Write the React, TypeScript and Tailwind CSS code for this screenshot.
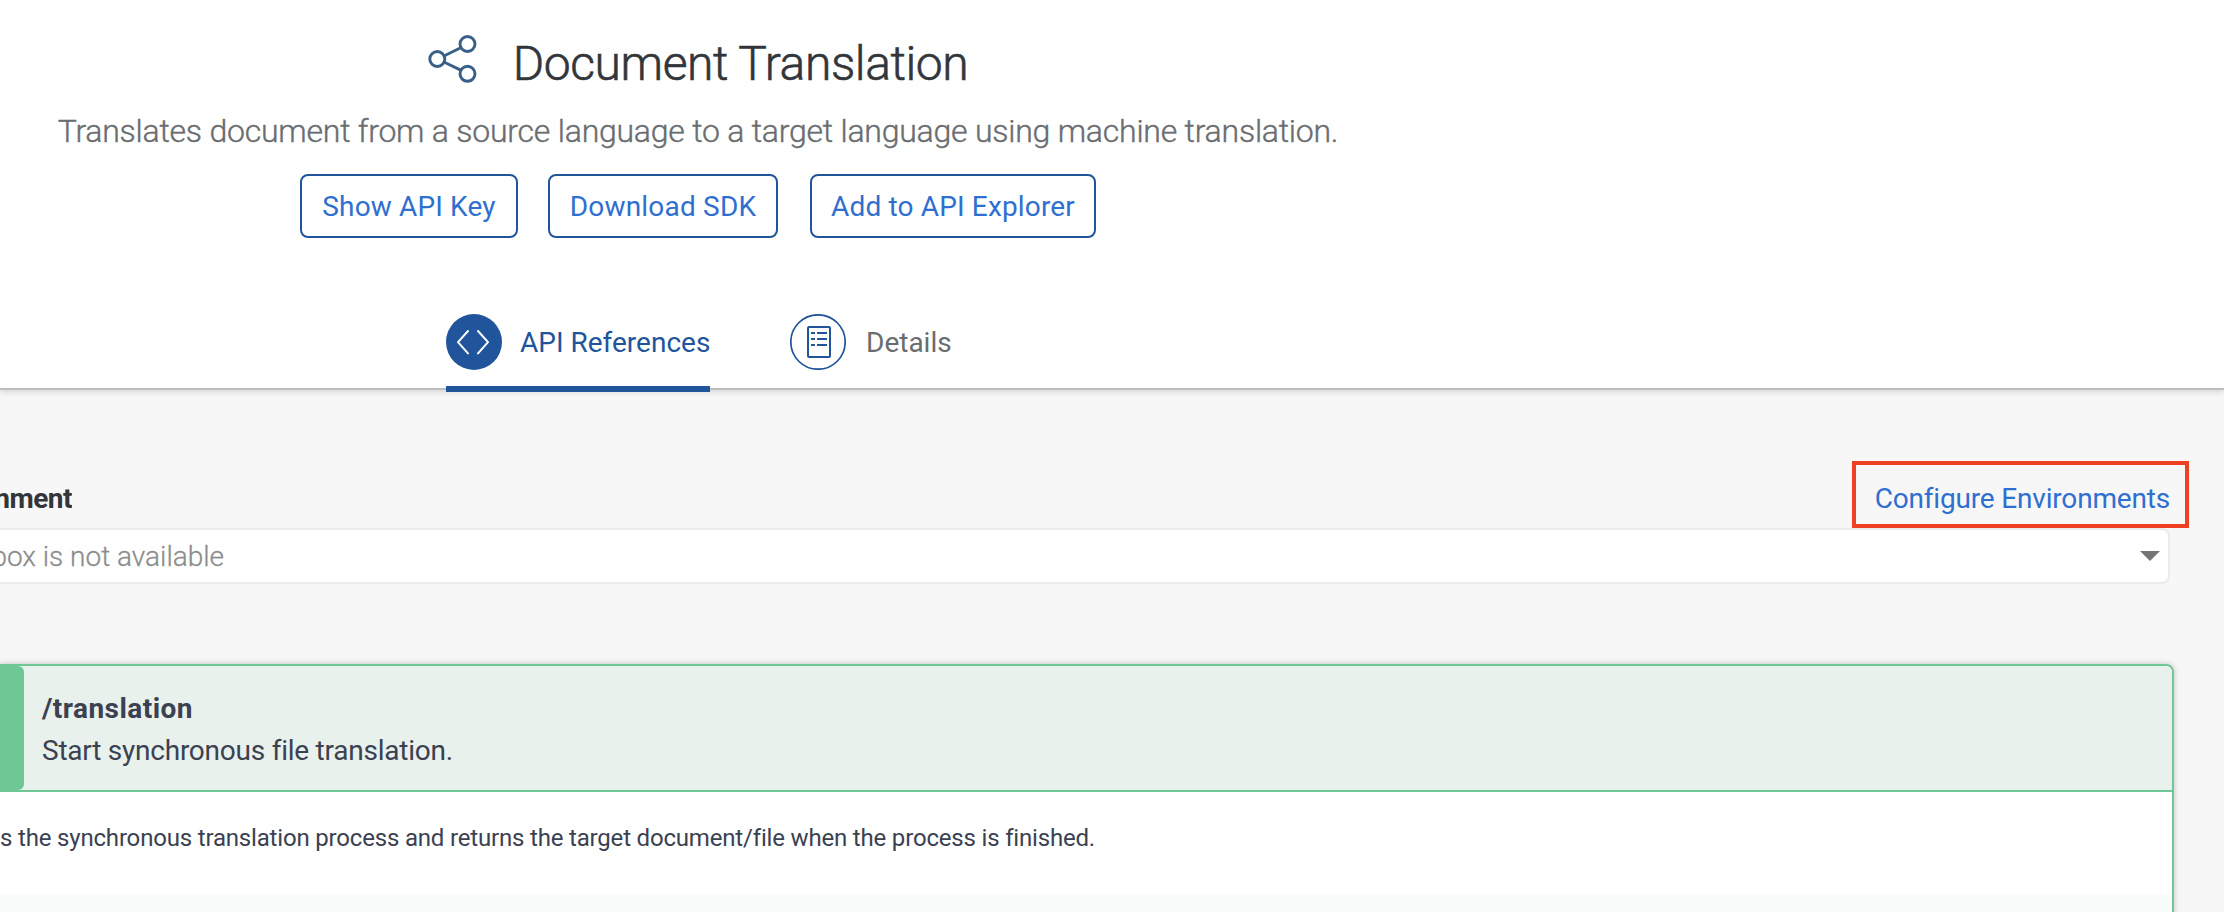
import type { ReactNode } from "react";

function ShareIcon() {
  return (
    <svg width="50" height="50" viewBox="0 0 50 50" fill="none" stroke="#385f88" strokeWidth="2.9">
      <circle cx="9.3" cy="25" r="7.5" />
      <circle cx="39.5" cy="10" r="7.5" />
      <circle cx="39.5" cy="39.8" r="7.5" />
      <path d="M16.4 21.7 32.7 13.7M16.4 28.3 32.7 36.1" />
    </svg>
  );
}

function CodeIcon() {
  return (
    <svg width="56" height="56" viewBox="0 0 56 56" fill="none" stroke="#fff" strokeWidth="2" strokeLinecap="round" strokeLinejoin="round">
      <path d="M22 17 12 28.2 22 39.4M32 17 42 28.2 32 39.4" />
    </svg>
  );
}

function DetailsIcon() {
  return (
    <svg width="56" height="56" viewBox="0 0 56 56" fill="none" stroke="#21559b" strokeWidth="2">
      <circle cx="28" cy="28" r="27.2" strokeWidth="1.7" />
      <rect x="18" y="13" width="22" height="30" rx="1" />
      <path d="M21 19h4M27 19h10M21 25h4M27 25h10M21 31h4M27 31h10" />
    </svg>
  );
}

function OutlineButton({ className, children }: { className: string; children: ReactNode }) {
  return (
    <button className={`h-16 rounded-lg border-2 border-[#21559b] pt-[2px] text-[28px] whitespace-nowrap text-[#2f6fd0] ${className}`}>
      {children}
    </button>
  );
}

export default function App() {
  return (
    <div className="flex h-[912px] w-full flex-col overflow-hidden bg-[#f7f7f7] font-['Roboto',sans-serif] text-[#32363a]">
      <header className="z-10 h-[390px] shrink-0 border-b-2 border-[#bdbdbd] bg-white shadow-[0_2px_6px_rgba(0,0,0,0.14)]">
        <div className="flex h-full w-[1396px] flex-col items-center">
          <div className="mt-8 flex h-16 items-start">
            <div className="mt-[2px] mr-[35px]">
              <ShareIcon />
            </div>
            <h1 className="text-[48px] leading-[64px] font-light tracking-[-0.43px] [-webkit-text-stroke:0.6px_#32363a]">
              Document Translation
            </h1>
          </div>
          <p className="mt-[11px] text-[32px] leading-[48px] font-light tracking-[-0.23px] whitespace-nowrap text-[#6a6d70] [-webkit-text-stroke:0.4px_#6a6d70]">
            Translates document from a source language to a target language using machine translation.
          </p>
          <div className="mt-[19px] flex">
            <OutlineButton className="w-[218px] tracking-[0.15px]">Show API Key</OutlineButton>
            <OutlineButton className="ml-[30px] w-[230px] tracking-[0.2px]">Download SDK</OutlineButton>
            <OutlineButton className="ml-8 w-[286px] tracking-[0.15px]">Add to API Explorer</OutlineButton>
          </div>
          <nav className="mt-[76px] flex w-[504px] text-[28px] leading-[58px]">
            <a className="flex h-[78px] w-[264px] border-b-[6px] border-[#21559b] text-[#21559b]">
              <span className="mr-[18px] size-14 rounded-full bg-[#21559b]">
                <CodeIcon />
              </span>
              <span className="whitespace-nowrap">API References</span>
            </a>
            <a className="ml-20 flex text-[#6a6d70]">
              <span className="mr-5 size-14">
                <DetailsIcon />
              </span>
              <span>Details</span>
            </a>
          </nav>
        </div>
      </header>

      <main className="flex flex-col pr-[50px]">
        <div className="mt-[71px] mr-[-15px] flex h-[67px] items-start justify-between">
          <div className="mt-[21px] flex w-[72px] justify-end overflow-hidden text-[28px] leading-[34px] font-bold tracking-[-0.5px]">
            nment
          </div>
          <div className="flex h-[67px] w-[337px] items-center justify-end border-4 border-[#ee4023] pr-[15px]">
            <a className="mt-[8px] text-[28px] leading-[34px] tracking-[-0.18px] whitespace-nowrap text-[#2f6fd0]">
              Configure Environments
            </a>
          </div>
        </div>

        <div className="mr-1 flex h-14 items-center justify-between rounded-r-lg border-2 border-l-0 border-[#ebebeb] bg-white pr-2">
          <div className="mt-[2px] flex w-56 justify-end overflow-hidden text-[28px] leading-[34px] font-light whitespace-nowrap text-[#8c8c8c] [-webkit-text-stroke:0.3px_#8c8c8c]">
            box is not available
          </div>
          <svg width="20" height="10" viewBox="0 0 20 10" fill="#757575">
            <path d="M0 0h20L10 10z" />
          </svg>
        </div>

        <section className="mt-20 h-[300px] rounded-tr-lg border-2 border-l-0 border-[#6fc795] bg-white text-[#3b4151] shadow-[0_0_6px_rgba(0,0,0,0.22)]">
          <div className="flex h-[126px] overflow-hidden rounded-tr-md border-b-2 border-[#6fc795] bg-[#e8f1ec]">
            <div className="w-6 rounded-r-md bg-[#6fc795]" />
            <div className="pt-[25px] pl-[18px] text-[28px]">
              <div className="h-[42px] leading-[36px] font-bold tracking-[0.45px]">/translation</div>
              <div className="leading-[36px] tracking-[-0.24px]">Start synchronous file translation.</div>
            </div>
          </div>
          <div className="flex h-[103px] w-[1095px] items-center justify-end pb-[12px] text-[24px] leading-[34px] tracking-[-0.18px] whitespace-nowrap">
            s the synchronous translation process and returns the target document/file when the process is finished.
          </div>
          <div className="h-16 bg-[#f8fcfb]" />
        </section>
      </main>
    </div>
  );
}
